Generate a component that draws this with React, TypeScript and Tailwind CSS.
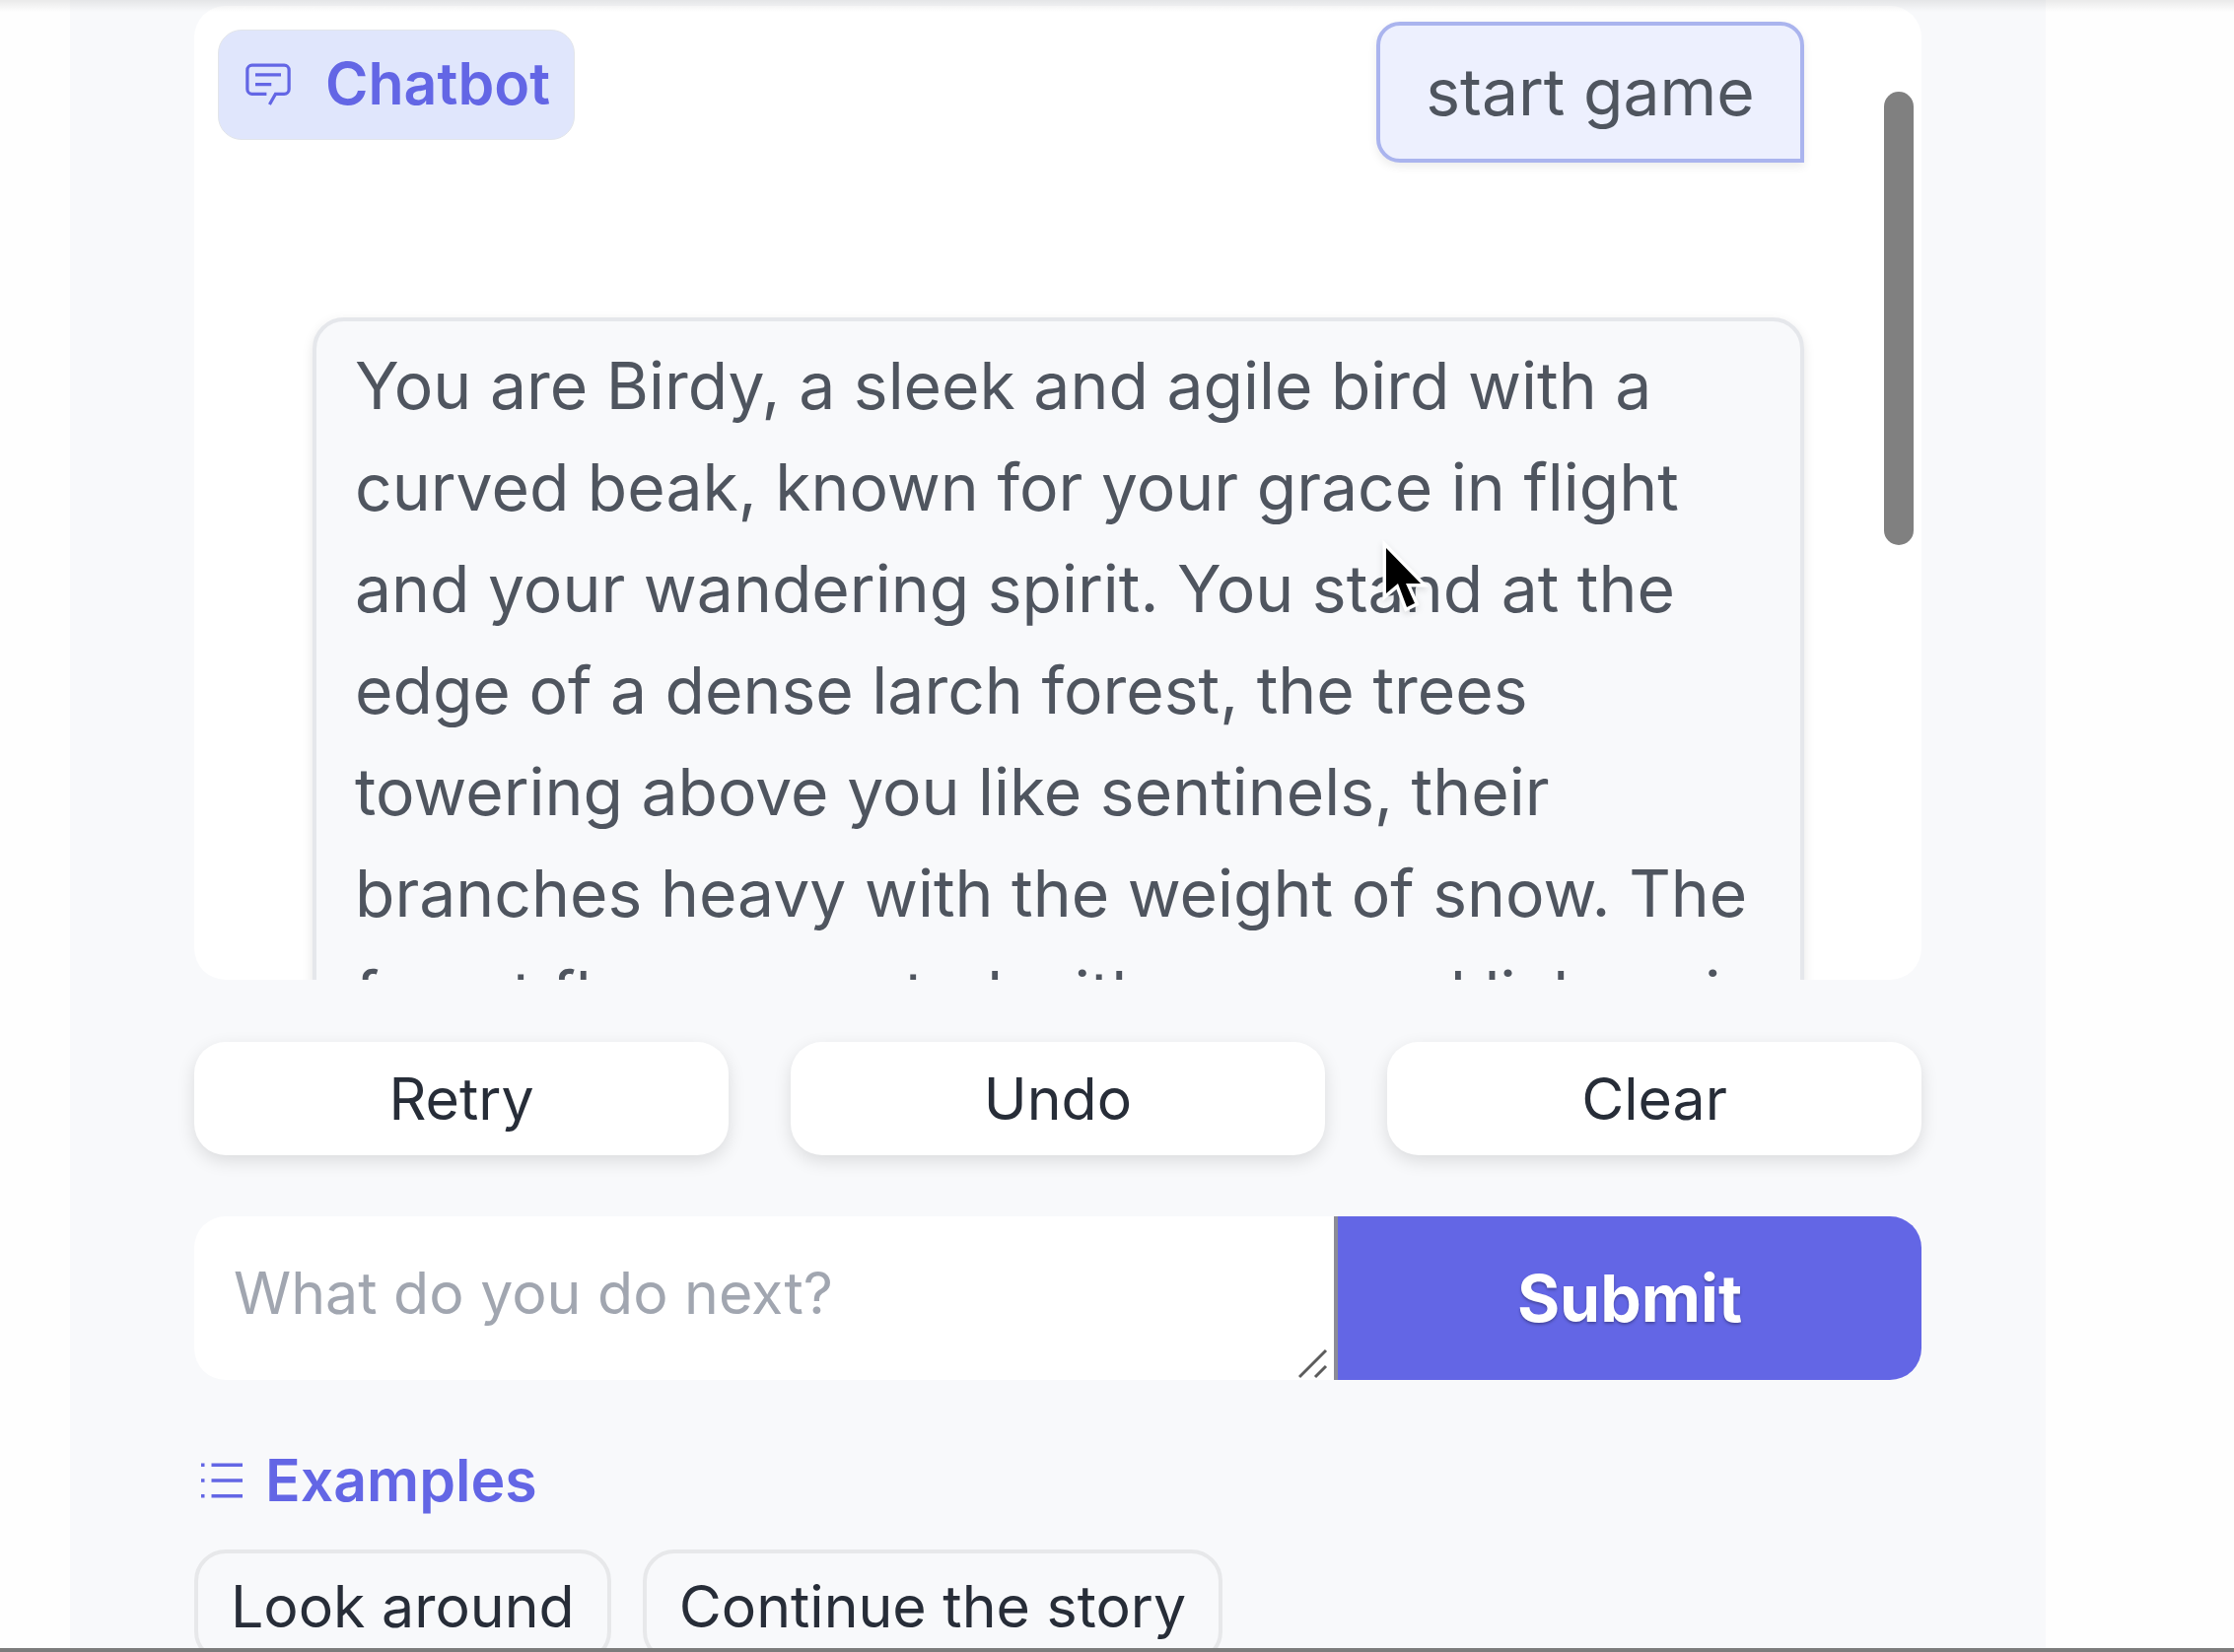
import React from "react";

const storyLines = [
  "You are Birdy, a sleek and agile bird with a",
  "curved beak, known for your grace in flight",
  "and your wandering spirit. You stand at the",
  "edge of a dense larch forest, the trees",
  "towering above you like sentinels, their",
  "branches heavy with the weight of snow. The",
  "forest floor, carpeted with moss and lichen, is",
];

function ChatIcon() {
  return (
    <svg viewBox="0 0 32 32" className="size-[52px] shrink-0" fill="currentColor" aria-hidden="true">
      <path d="M17.74 30L16 29l4-7h6a2 2 0 0 0 2-2V8a2 2 0 0 0-2-2H6a2 2 0 0 0-2 2v12a2 2 0 0 0 2 2h9v2H6a4 4 0 0 1-4-4V8a4 4 0 0 1 4-4h20a4 4 0 0 1 4 4v12a4 4 0 0 1-4 4h-4.84Z" />
      <path d="M8 10h16v2H8zm0 6h10v2H8z" />
    </svg>
  );
}

function ListIcon() {
  return (
    <svg viewBox="0 0 32 32" className="size-14 shrink-0" fill="currentColor" aria-hidden="true">
      <path d="M10 6h18v2H10zm0 18h18v2H10zm0-9h18v2H10zm-6 0h2v2H4zm0-9h2v2H4zm0 18h2v2H4z" />
    </svg>
  );
}

function Chat() {
  return (
    <section aria-label="Chatbot" className="relative h-[988px] shrink-0 overflow-hidden rounded-[32px] bg-white pt-4 pr-[119px] pl-[120px] text-[66px] leading-[103px] text-[#4f555f]">
      <h2 className="absolute top-6 left-6 flex h-28 items-center gap-8 rounded-3xl border border-[#e2e5ea] bg-[#e0e6fc] px-6 pb-1 text-[59px] font-semibold text-[#6366e5]">
        <ChatIcon />
        Chatbot
      </h2>
      <p className="ml-auto w-fit min-w-[434px] rounded-3xl rounded-br-none border-4 border-[#aab4ee] bg-[#edf0fe] px-10 py-4 text-center shadow-[0_4px_10px_rgba(0,0,0,0.08)]">
        start game
      </p>
      <p className="mt-[157px] rounded-t-[32px] border-4 border-[#e5e7eb] bg-[#f8f9fb] px-[39px] pt-3.5 pb-4 whitespace-nowrap shadow-[0_4px_12px_rgba(0,0,0,0.1)]">
        {storyLines.map((line) => (
          <span key={line} className="block">{line}</span>
        ))}
      </p>
      <div className="absolute top-[87px] right-2 h-[460px] w-[30px] rounded-full bg-[#808080]" />
    </section>
  );
}

function Pointer() {
  return (
    <svg viewBox="0 0 52 78" className="absolute top-[548px] left-[1400px] h-[78px] w-[52px] overflow-visible drop-shadow-md" aria-hidden="true">
      <path d="M6 8V54L18 44L27 68L35 64L26 44H41Z" fill="black" stroke="white" strokeWidth="7" paintOrder="stroke" />
    </svg>
  );
}

export default function App() {
  return (
    <div className="relative h-screen overflow-hidden bg-[#fefefe] font-['Inter',sans-serif] text-[59px] leading-[84px] text-[#272d38]">
      <main className="mr-[191px] ml-[71px] flex h-full flex-col bg-[#f8f9fb] px-[126px] pt-1.5">
        <Chat />
        <div className="mt-[63px] grid shrink-0 grid-cols-3 gap-[63px]">
          {["Retry", "Undo", "Clear"].map((name) => (
            <button key={name} type="button" className="h-[115px] rounded-[32px] bg-white shadow-[0_6px_18px_rgba(0,0,0,0.12)]">
              {name}
            </button>
          ))}
        </div>
        <form className="mt-[62px] flex h-[166px] shrink-0 overflow-hidden rounded-[32px]">
          <div className="relative flex-[1158]">
            <textarea
              aria-label="Your next move"
              placeholder="What do you do next?"
              className="block size-full resize-none overflow-hidden bg-white px-10 pt-9 placeholder:text-[#a1a6b0] placeholder:opacity-100"
            />
            <svg viewBox="0 0 30 32" className="absolute right-1.5 bottom-0 h-8 w-[30px]" fill="none" stroke="#5c5c5c" strokeWidth="3" aria-hidden="true">
              <path d="M1 29L28 2M17 29L28 18" />
            </svg>
          </div>
          <button type="button" className="flex-[593] border-l-4 border-[#8c8c96] bg-[#6366e5] text-[66px] font-bold text-white [text-shadow:0_2px_3px_rgba(0,0,0,0.3)]">
            Submit
          </button>
        </form>
        <h2 className="mt-[60px] flex shrink-0 items-center gap-4 font-semibold text-[#6366e5]">
          <ListIcon />
          Examples
        </h2>
        <div className="mt-7 flex shrink-0 gap-8">
          {["Look around", "Continue the story"].map((name) => (
            <button key={name} type="button" className="h-[115px] rounded-[32px] border-4 border-[#e7e8ea] px-[33px] whitespace-nowrap">
              {name}
            </button>
          ))}
        </div>
      </main>
      <div className="absolute inset-x-0 top-0 h-3 bg-linear-to-b from-black/8 to-transparent" />
      <div className="absolute inset-x-0 bottom-0 h-1 bg-[#7c7c7c]" />
      <Pointer />
    </div>
  );
}
